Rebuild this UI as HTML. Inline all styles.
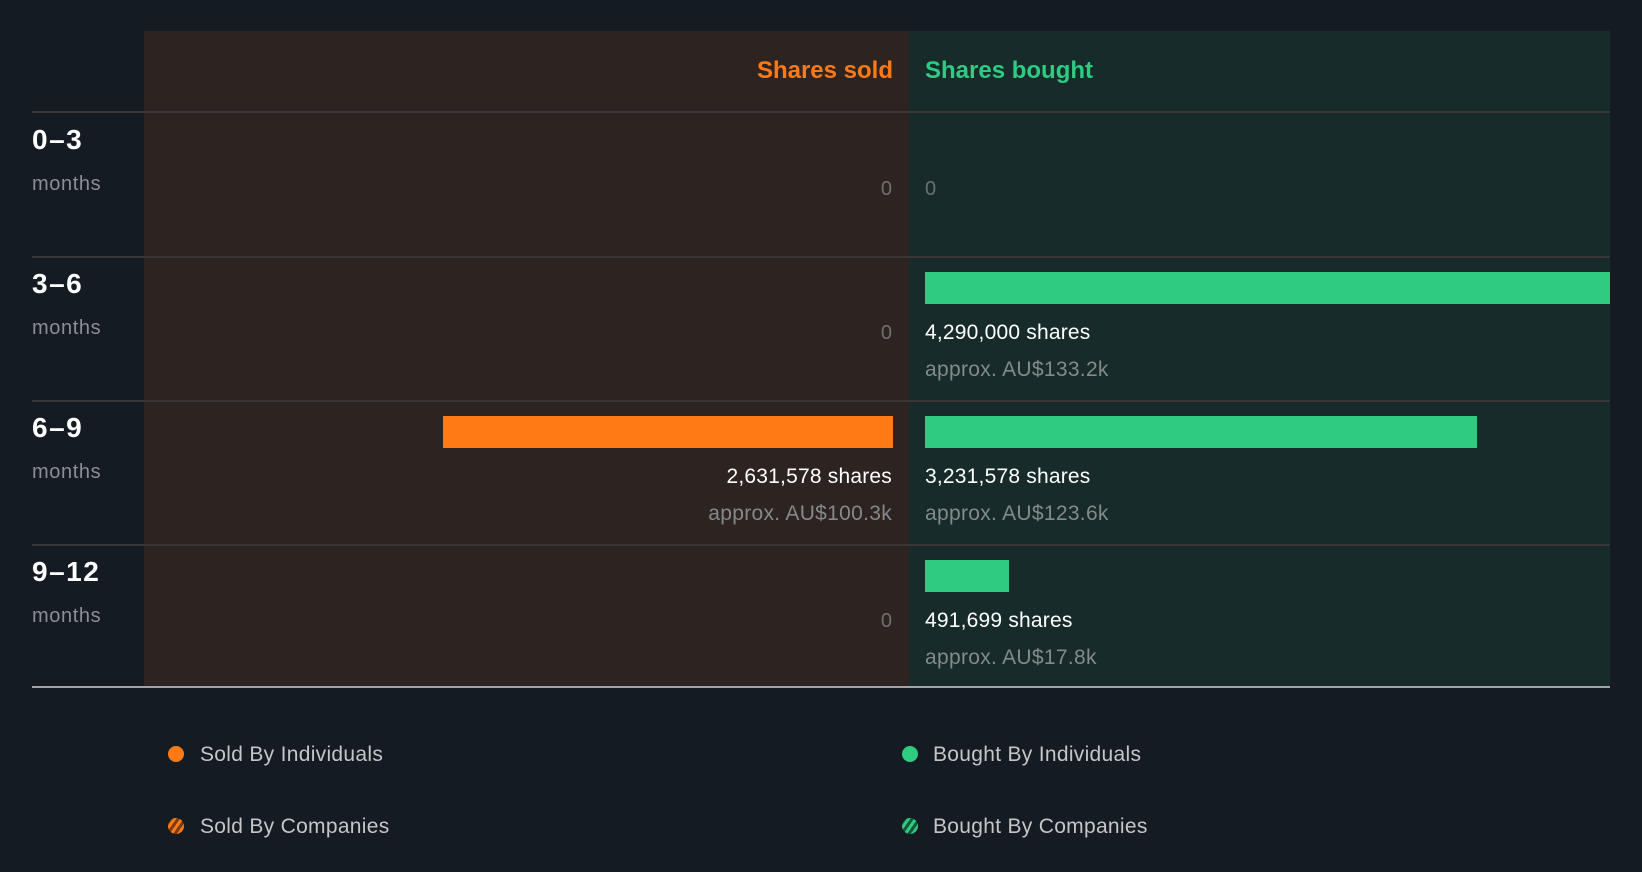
<!DOCTYPE html>
<html><head><meta charset="utf-8"><style>
*{margin:0;padding:0;box-sizing:border-box}
body{width:1642px;height:872px;background:#151b23;font-family:"Liberation Sans",Arial,sans-serif;position:relative;overflow:hidden}
.a{position:absolute;white-space:nowrap}
.sold{left:144px;width:765px;top:31px;height:656px;background:#2d2321}
.bgt{left:909px;width:701px;top:31px;height:656px;background:#172b2b}
.ln{left:32px;width:1578px;height:2px;background:#3a3636}
.lbl{left:32px;font-size:28px;font-weight:bold;color:#fff;letter-spacing:1.5px}
.mo{left:32px;font-size:20px;color:#8a8f94;letter-spacing:0.6px}
.z{font-size:20px;color:#6e7073}
.v{font-size:21px;color:#fff;letter-spacing:0.2px}
.ap{font-size:21px;color:#85898c;letter-spacing:0.3px}
.r{text-align:right;right:750px}
.og{background:#ff7a15}
.gr{background:#2ecb80}
.leg{font-size:21px;color:#c4c6c8;letter-spacing:0.3px}
.dot{width:16px;height:16px;border-radius:50%}
</style></head><body>
<div class="a sold"></div><div class="a bgt"></div>
<div class="a" style="right:749px;top:57px;font-size:24px;font-weight:bold;color:#ff7a15">Shares sold</div>
<div class="a" style="left:925px;top:57px;font-size:24px;font-weight:bold;color:#2ecb80">Shares bought</div>
<div class="a ln" style="top:111px"></div>
<div class="a ln" style="top:256px"></div>
<div class="a ln" style="top:400px"></div>
<div class="a ln" style="top:544px"></div>
<div class="a" style="left:32px;width:1578px;top:686px;height:2px;background:#a0a4a8"></div>

<div class="a lbl" style="top:124px">0–3</div><div class="a mo" style="top:173px">months</div>
<div class="a lbl" style="top:268px">3–6</div><div class="a mo" style="top:317px">months</div>
<div class="a lbl" style="top:412px">6–9</div><div class="a mo" style="top:461px">months</div>
<div class="a lbl" style="top:556px">9–12</div><div class="a mo" style="top:605px">months</div>

<div class="a z r" style="top:178px">0</div><div class="a z" style="left:925px;top:178px">0</div>
<div class="a z r" style="top:322px">0</div>
<div class="a gr" style="left:925px;width:685px;top:272px;height:32px"></div>
<div class="a v" style="left:925px;top:321px">4,290,000 shares</div>
<div class="a ap" style="left:925px;top:358px">approx. AU$133.2k</div>

<div class="a og" style="left:443px;width:450px;top:416px;height:32px"></div>
<div class="a gr" style="left:925px;width:552px;top:416px;height:32px"></div>
<div class="a v r" style="top:465px">2,631,578 shares</div>
<div class="a ap r" style="top:502px">approx. AU$100.3k</div>
<div class="a v" style="left:925px;top:465px">3,231,578 shares</div>
<div class="a ap" style="left:925px;top:502px">approx. AU$123.6k</div>

<div class="a z r" style="top:610px">0</div>
<div class="a gr" style="left:925px;width:84px;top:560px;height:32px"></div>
<div class="a v" style="left:925px;top:609px">491,699 shares</div>
<div class="a ap" style="left:925px;top:646px">approx. AU$17.8k</div>

<div class="a dot" style="left:168px;top:746px;background:#ff7a15"></div>
<div class="a leg" style="left:200px;top:743px">Sold By Individuals</div>
<div class="a dot" style="left:168px;top:818px;background:repeating-linear-gradient(-55deg,#7a3a14 0 3px,#ff7a15 3px 6px)"></div>
<div class="a leg" style="left:200px;top:815px">Sold By Companies</div>
<div class="a dot" style="left:902px;top:746px;background:#2ecb80"></div>
<div class="a leg" style="left:933px;top:743px">Bought By Individuals</div>
<div class="a dot" style="left:902px;top:818px;background:repeating-linear-gradient(-55deg,#16553a 0 3px,#2ecb80 3px 6px)"></div>
<div class="a leg" style="left:933px;top:815px">Bought By Companies</div>
</body></html>
